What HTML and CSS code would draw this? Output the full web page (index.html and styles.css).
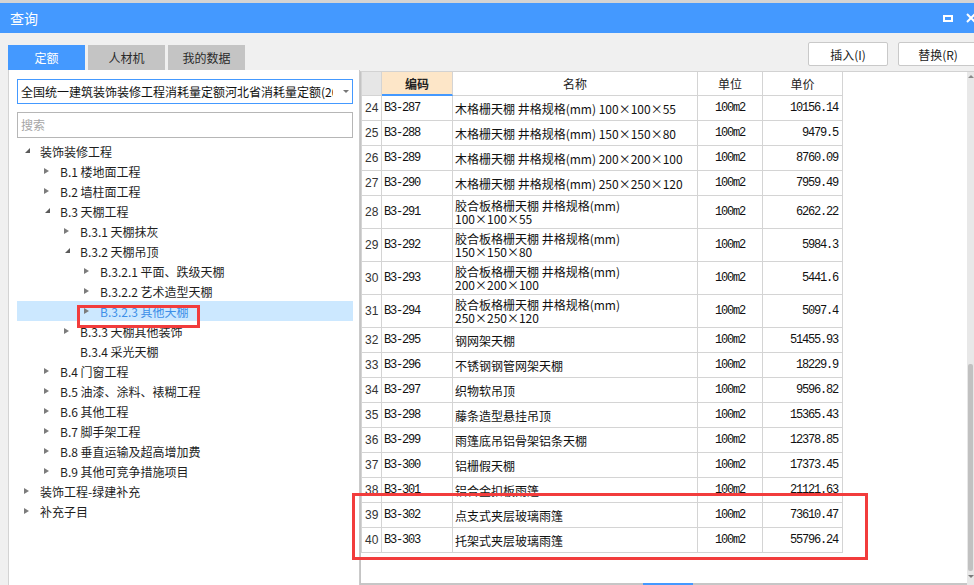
FILE: index.html
```html
<!DOCTYPE html>
<html lang="zh-CN">
<head>
<meta charset="utf-8">
<title>查询</title>
<link rel="stylesheet" href="styles.css">
</head>
<body>
<div class="window">
  <header class="titlebar">
    <span class="title">查询</span>
    <span class="win-ctrls">
      <span class="ctrl-max"></span>
      <svg class="ctrl-close" viewBox="0 0 10 10" width="10" height="10"><path d="M1 1 L9 9 M9 1 L1 9" stroke="#fff" stroke-width="2" fill="none"/></svg>
    </span>
  </header>

  <div class="toolbar">
    <div class="tabs">
      <div class="tab active">定额</div>
      <div class="tab">人材机</div>
      <div class="tab">我的数据</div>
    </div>
    <div class="actions">
      <button class="btn">插入(I)</button>
      <button class="btn">替换(R)</button>
    </div>
  </div>

  <div class="main">
    <aside class="left">
      <div class="select">
        <span class="select-text">全国统一建筑装饰装修工程消耗量定额河北省消耗量定额(2012)</span>
        <span class="caret"></span>
      </div>
      <div class="search">搜索</div>
      <ul class="tree">
        <li class="node l0"><i class="tw open"></i><span>装饰装修工程</span></li>
        <li class="node l1"><i class="tw closed"></i><span>B.1 楼地面工程</span></li>
        <li class="node l1"><i class="tw closed"></i><span>B.2 墙柱面工程</span></li>
        <li class="node l1"><i class="tw open"></i><span>B.3 天棚工程</span></li>
        <li class="node l2"><i class="tw closed"></i><span>B.3.1 天棚抹灰</span></li>
        <li class="node l2"><i class="tw open"></i><span>B.3.2 天棚吊顶</span></li>
        <li class="node l3"><i class="tw closed"></i><span>B.3.2.1 平面、跌级天棚</span></li>
        <li class="node l3"><i class="tw closed"></i><span>B.3.2.2 艺术造型天棚</span></li>
        <li class="node l3 selected"><i class="tw closed"></i><span>B.3.2.3 其他天棚</span></li>
        <li class="node l2"><i class="tw closed"></i><span>B.3.3 天棚其他装饰</span></li>
        <li class="node l2"><i class="tw"></i><span>B.3.4 采光天棚</span></li>
        <li class="node l1"><i class="tw closed"></i><span>B.4 门窗工程</span></li>
        <li class="node l1"><i class="tw closed"></i><span>B.5 油漆、涂料、裱糊工程</span></li>
        <li class="node l1"><i class="tw closed"></i><span>B.6 其他工程</span></li>
        <li class="node l1"><i class="tw closed"></i><span>B.7 脚手架工程</span></li>
        <li class="node l1"><i class="tw closed"></i><span>B.8 垂直运输及超高增加费</span></li>
        <li class="node l1"><i class="tw closed"></i><span>B.9 其他可竞争措施项目</span></li>
        <li class="node l0"><i class="tw closed"></i><span>装饰工程-绿建补充</span></li>
        <li class="node l0"><i class="tw closed"></i><span>补充子目</span></li>
      </ul>
    </aside>

    <section class="gridpane">
      <div class="gridbody">
        <div class="grid">
          <div class="row head">
            <div class="rn corner"></div>
            <div class="h code-h">编码</div>
            <div class="h">名称</div>
            <div class="h">单位</div>
            <div class="h">单价</div>
          </div>
          <div class="row"><div class="rn">24</div><div class="code">B3-287</div><div class="name">木格栅天棚 井格规格(mm) 100×100×55</div><div class="unit">100m2</div><div class="price">10156.14</div></div>
          <div class="row"><div class="rn">25</div><div class="code">B3-288</div><div class="name">木格栅天棚 井格规格(mm) 150×150×80</div><div class="unit">100m2</div><div class="price">9479.5</div></div>
          <div class="row"><div class="rn">26</div><div class="code">B3-289</div><div class="name">木格栅天棚 井格规格(mm) 200×200×100</div><div class="unit">100m2</div><div class="price">8760.09</div></div>
          <div class="row"><div class="rn">27</div><div class="code">B3-290</div><div class="name">木格栅天棚 井格规格(mm) 250×250×120</div><div class="unit">100m2</div><div class="price">7959.49</div></div>
          <div class="row tall"><div class="rn">28</div><div class="code">B3-291</div><div class="name">胶合板格栅天棚 井格规格(mm)<br>100×100×55</div><div class="unit">100m2</div><div class="price">6262.22</div></div>
          <div class="row tall"><div class="rn">29</div><div class="code">B3-292</div><div class="name">胶合板格栅天棚 井格规格(mm)<br>150×150×80</div><div class="unit">100m2</div><div class="price">5984.3</div></div>
          <div class="row tall"><div class="rn">30</div><div class="code">B3-293</div><div class="name">胶合板格栅天棚 井格规格(mm)<br>200×200×100</div><div class="unit">100m2</div><div class="price">5441.6</div></div>
          <div class="row tall"><div class="rn">31</div><div class="code">B3-294</div><div class="name">胶合板格栅天棚 井格规格(mm)<br>250×250×120</div><div class="unit">100m2</div><div class="price">5097.4</div></div>
          <div class="row"><div class="rn">32</div><div class="code">B3-295</div><div class="name">钢网架天棚</div><div class="unit">100m2</div><div class="price">51455.93</div></div>
          <div class="row"><div class="rn">33</div><div class="code">B3-296</div><div class="name">不锈钢钢管网架天棚</div><div class="unit">100m2</div><div class="price">18229.9</div></div>
          <div class="row"><div class="rn">34</div><div class="code">B3-297</div><div class="name">织物软吊顶</div><div class="unit">100m2</div><div class="price">9596.82</div></div>
          <div class="row"><div class="rn">35</div><div class="code">B3-298</div><div class="name">藤条造型悬挂吊顶</div><div class="unit">100m2</div><div class="price">15365.43</div></div>
          <div class="row"><div class="rn">36</div><div class="code">B3-299</div><div class="name">雨篷底吊铝骨架铝条天棚</div><div class="unit">100m2</div><div class="price">12378.85</div></div>
          <div class="row"><div class="rn">37</div><div class="code">B3-300</div><div class="name">铝栅假天棚</div><div class="unit">100m2</div><div class="price">17373.45</div></div>
          <div class="row"><div class="rn">38</div><div class="code">B3-301</div><div class="name">铝合金扣板雨篷</div><div class="unit">100m2</div><div class="price">21121.63</div></div>
          <div class="row"><div class="rn">39</div><div class="code">B3-302</div><div class="name">点支式夹层玻璃雨篷</div><div class="unit">100m2</div><div class="price">73610.47</div></div>
          <div class="row"><div class="rn">40</div><div class="code">B3-303</div><div class="name">托架式夹层玻璃雨篷</div><div class="unit">100m2</div><div class="price">55796.24</div></div>
        </div>
        <div class="hscroll"><span class="hthumb"></span></div>
      </div>
      <div class="vscroll">
        <span class="arrow-up"></span>
        <span class="vthumb"></span>
        <span class="arrow-down"></span>
      </div>
    </section>
  </div>
</div>
<div class="mark mark-tree"></div>
<div class="mark mark-rows"></div>
</body>
</html>
```

FILE: styles.css
```css
* { box-sizing: border-box; margin: 0; padding: 0; }

html, body {
  width: 974px;
  height: 585px;
  overflow: hidden;
}

body {
  position: relative;
  font-family: "Noto Sans CJK SC", "Noto Sans", sans-serif;
  font-size: 12px;
  color: #222;
  background: #f0f0f0;
}

.window {
  width: 974px;
  height: 585px;
  border-top: 3px solid #d4d4d4;
  display: flex;
  flex-direction: column;
}

/* title bar */
.titlebar {
  flex: none;
  height: 30px;
  background: #4499ff;
  color: #fff;
  display: flex;
  align-items: center;
  justify-content: space-between;
  padding-left: 10px;
  font-size: 14px;
}
.win-ctrls {
  display: flex;
  align-items: center;
  gap: 13px;
  margin-right: -2px;
}
.ctrl-max {
  display: block;
  width: 10px;
  height: 7px;
  border: 2px solid #fff;
}
.ctrl-close { display: block; }

/* toolbar */
.toolbar {
  flex: none;
  height: 37px;
  display: flex;
  padding-left: 8px;
}
.tabs {
  display: flex;
  gap: 3px;
  align-self: flex-end;
}
.tab {
  width: 77px;
  height: 25px;
  line-height: 25px;
  text-align: center;
  background: #c4c4c4;
  color: #2a2a2a;
}
.tab.active {
  background: #4499ff;
  color: #fff;
}
.actions {
  margin-left: auto;
  margin-right: -4px;
  margin-top: 9px;
  display: flex;
  gap: 10px;
}
.btn {
  width: 80px;
  height: 24px;
  background: #fff;
  border: 1px solid #c9c9c9;
  border-radius: 2px;
  font-family: "Noto Sans CJK SC", "Noto Sans", sans-serif;
  font-size: 12px;
  color: #222;
}

/* main */
.main {
  flex: 1;
  display: flex;
  min-height: 0;
}

.left {
  flex: none;
  width: 352px;
  margin-left: 8px;
  background: #fff;
  border-left: 1px solid #d3d3d3;
  border-right: 1px solid #cacaca;
  padding: 9px 6px 0 8px;
}
.select {
  height: 25px;
  border: 1px solid #4499ff;
  display: flex;
  align-items: center;
  padding-left: 3px;
}
.select-text {
  width: 312px;
  overflow: hidden;
  white-space: nowrap;
  color: #111;
}
.caret {
  margin-left: 10px;
  width: 0;
  height: 0;
  border-top: 3px solid #777;
  border-left: 3px solid transparent;
  border-right: 3px solid transparent;
}
.search {
  margin-top: 8px;
  height: 26px;
  border: 1px solid #b6b6b6;
  padding-left: 3px;
  line-height: 24px;
  color: #a6a6a6;
}

.tree {
  list-style: none;
  margin-top: 3px;
}
.node {
  height: 20px;
  display: flex;
  align-items: center;
  white-space: nowrap;
  color: #1e1e1e;
}
.node.l0 { padding-left: 8px; }
.node.l1 { padding-left: 28px; }
.node.l2 { padding-left: 48px; }
.node.l3 { padding-left: 68px; }
.node.selected {
  background: #cce8ff;
  color: #3d8fe8;
}
.tw {
  flex: none;
  width: 15px;
  height: 20px;
  position: relative;
}
.tw.closed::before {
  content: "";
  position: absolute;
  left: -1px;
  top: 7px;
  border-left: 5px solid #7c7c7c;
  border-top: 3.5px solid transparent;
  border-bottom: 3.5px solid transparent;
}
.tw.open::before {
  content: "";
  position: absolute;
  left: 0;
  top: 7px;
  border-bottom: 5px solid #5a5a5a;
  border-left: 5px solid transparent;
}

/* grid */
.gridpane {
  flex: 1;
  display: flex;
  margin-top: 1px;
  background: #fff;
  border-top: 1px solid #d2d2d2;
  border-left: 1px solid #c4c4c4;
  min-width: 0;
}
.gridbody {
  flex: 1;
  display: flex;
  flex-direction: column;
}
.grid { width: 482px; }
.row {
  display: grid;
  grid-template-columns: 21px 71px 245px 65px 80px;
  height: 25px;
}
.row.head { height: 24px; }
.row.tall { height: 33px; }
.row > div {
  border-right: 1px solid #d4d4d4;
  border-bottom: 1px solid #d4d4d4;
  display: flex;
  align-items: center;
  white-space: nowrap;
  overflow: hidden;
}
.row > .rn {
  border-left: 1px solid #d4d4d4;
  padding-left: 3px;
  font-family: "Liberation Sans", Arial, sans-serif;
  font-size: 12px;
  color: #333;
}
.row > .corner { background: #e6e6e6; }
.row > .h {
  justify-content: center;
  color: #222;
}
.row > .code-h {
  background: #fde6c8;
  font-weight: bold;
  border-bottom: 2px solid #4499ff;
}
.row > .code,
.row > .unit,
.row > .price {
  font-family: "Liberation Mono", monospace;
  font-size: 12px;
  letter-spacing: -1.2px;
  color: #111;
}
.row > .code { padding-left: 2px; }
.row > .unit { justify-content: center; }
.row > .price { justify-content: flex-end; padding-right: 4px; }
.row > .name {
  padding-left: 2px;
  line-height: 13px;
  color: #111;
}

.hscroll {
  margin-top: auto;
  height: 2px;
  background: #c6c6c6;
  display: flex;
}
.hthumb {
  margin-left: 282px;
  width: 50px;
  background: #4499ff;
}

.vscroll {
  flex: none;
  width: 7px;
  background: #e8e8e8;
  display: flex;
  flex-direction: column;
  align-items: center;
  padding-top: 3px;
}
.arrow-up {
  width: 0;
  height: 0;
  border-bottom: 3px solid #8a8a8a;
  border-left: 3px solid transparent;
  border-right: 3px solid transparent;
}
.vthumb {
  margin-top: 286px;
  width: 5px;
  height: 207px;
  border-radius: 2px;
  background: #c1c1c1;
}
.arrow-down {
  margin-top: 4px;
  width: 0;
  height: 0;
  border-top: 3px solid #7a7a7a;
  border-left: 3px solid transparent;
  border-right: 3px solid transparent;
}

/* annotation boxes drawn over the screenshot */
.mark {
  position: absolute;
  border: 3px solid #f23c3c;
  pointer-events: none;
}
.mark-tree {
  left: 77px;
  top: 305px;
  width: 123px;
  height: 23px;
}
.mark-rows {
  left: 352px;
  top: 493px;
  width: 516px;
  height: 67px;
}
```
